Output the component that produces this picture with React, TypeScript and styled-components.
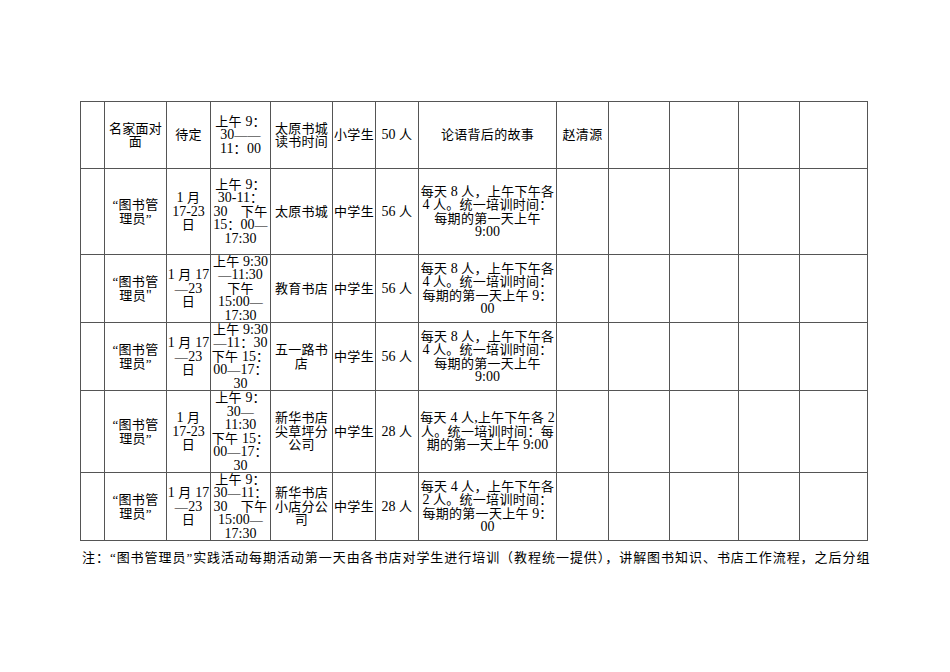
import React from 'react';
import styled, { createGlobalStyle } from 'styled-components';

const GlobalStyle = createGlobalStyle`
  html, body {
    margin: 0;
    padding: 0;
    background: #ffffff;
  }
  body {
    font-family: "Liberation Serif", "Noto Sans CJK SC", serif;
    color: #000;
  }
`;

const Page = styled.div`
  width: 950px;
  height: 672px;
  padding: 101px 0 0 80px;
  box-sizing: border-box;
  background: #fff;
`;

const Grid = styled.div`
  display: grid;
  grid-template-columns: 23px 61px 43px 59px 61px 42px 42px 137px 51px 60px 68px 60px 67px;
  grid-template-rows: 66px 85px 67px 67px 81px 67px;
  gap: 1px;
  padding: 1px;
  background: #555;
  width: max-content;
`;

const Cell = styled.div`
  background: #fff;
  display: flex;
  flex-direction: column;
  justify-content: center;
  align-items: center;
  font-size: 13px;
  line-height: 13.5px;
  text-align: center;
  white-space: pre;
  overflow: visible;
  padding: 0 1px;
`;

const Line = styled.span`
  display: block;
  letter-spacing: 0.3px;
`;

const Latin = styled.span`
  font-family: "Liberation Serif", serif;
  font-size: 14px;
  letter-spacing: 0;
`;

const Note = styled.div`
  width: 788px;
  margin: 10px 0 0 2px;
  font-size: 13px;
  line-height: 14px;
  text-align: justify;
  text-align-last: justify;
  white-space: nowrap;
  letter-spacing: 0.55px;
`;

type Row = string[][];

const rows: Row[] = [
  [
    [],
    ['名家面对', '面'],
    ['待定'],
    ['上午 9：', '30——', '11：00'],
    ['太原书城', '读书时间'],
    ['小学生'],
    ['50 人'],
    ['论语背后的故事'],
    ['赵清源'],
    [], [], [], [],
  ],
  [
    [],
    ['“图书管', '理员”'],
    ['1 月', '17-23', '日'],
    ['上午 9：', '30-11：', '30　下午', '15：00—', '17:30'],
    ['太原书城'],
    ['中学生'],
    ['56 人'],
    ['每天 8 人，上午下午各', '4 人。统一培训时间：', '每期的第一天上午', '9:00'],
    [], [], [], [], [],
  ],
  [
    [],
    ['“图书管', '理员"'],
    ['1 月 17', '—23', '日'],
    ['上午 9:30', '—11:30', '下午', '15:00—', '17:30'],
    ['教育书店'],
    ['中学生'],
    ['56 人'],
    ['每天 8 人，上午下午各', '4 人。统一培训时间：', '每期的第一天上午 9：', '00'],
    [], [], [], [], [],
  ],
  [
    [],
    ['“图书管', '理员”'],
    ['1 月 17', '—23', '日'],
    ['上午 9:30', '—11：30', '下午 15：', '00—17：', '30'],
    ['五一路书', '店'],
    ['中学生'],
    ['56 人'],
    ['每天 8 人，上午下午各', '4 人。统一培训时间：', '每期的第一天上午', '9:00'],
    [], [], [], [], [],
  ],
  [
    [],
    ['“图书管', '理员”'],
    ['1 月', '17-23', '日'],
    ['上午 9：', '30—', '11:30', '下午 15：', '00—17：', '30'],
    ['新华书店', '尖草坪分', '公司'],
    ['中学生'],
    ['28 人'],
    ['每天 4 人,上午下午各 2', '人。统一培训时间：每', '期的第一天上午 9:00'],
    [], [], [], [], [],
  ],
  [
    [],
    ['“图书管', '理员”'],
    ['1 月 17', '—23', '日'],
    ['上午 9：', '30—11：', '30　下午', '15:00—', '17:30'],
    ['新华书店', '小店分公', '司'],
    ['中学生'],
    ['28 人'],
    ['每天 4 人，上午下午各', '2 人。统一培训时间：', '每期的第一天上午 9：', '00'],
    [], [], [], [], [],
  ],
];

// wrap ascii runs (digits, colons, spaces) so they get the taller latin face
const renderText = (text: string) =>
  text.split(/([\x20-\x7E]+)/).map((part, i) =>
    /^[\x20-\x7E]+$/.test(part) ? <Latin key={i}>{part}</Latin> : part
  );

const App: React.FC = () => {
  return (
    <>
      <GlobalStyle />
      <Page>
        <Grid>
          {rows.map((row, r) =>
            row.map((lines, c) => (
              <Cell key={`${r}-${c}`}>
                {lines.map((l, i) => (
                  <Line key={i}>{renderText(l)}</Line>
                ))}
              </Cell>
            ))
          )}
        </Grid>
        <Note>
          注：“图书管理员”实践活动每期活动第一天由各书店对学生进行培训（教程统一提供），讲解图书知识、书店工作流程，之后分组
        </Note>
      </Page>
    </>
  );
};

export default App;
